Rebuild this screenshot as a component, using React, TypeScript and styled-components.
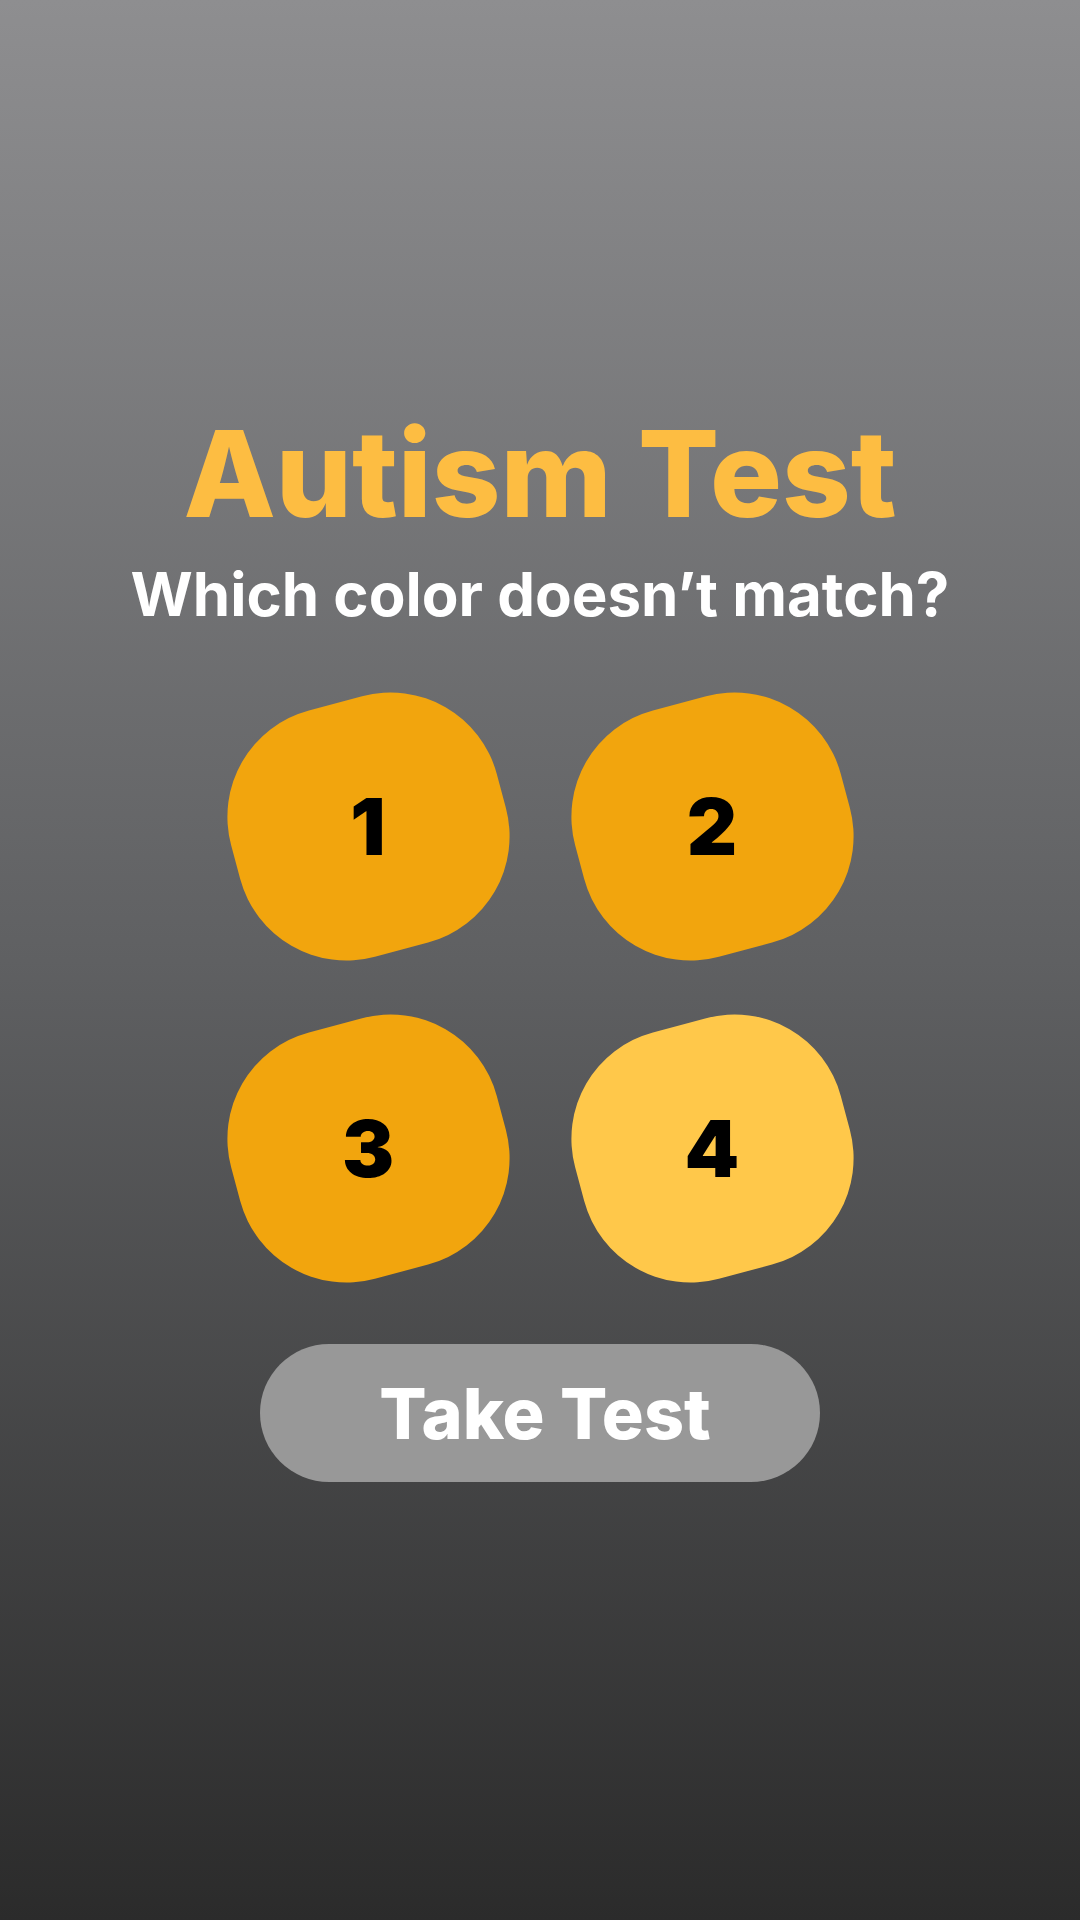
import React from 'react'
import styled, { createGlobalStyle } from 'styled-components'

const GlobalStyle = createGlobalStyle`
  html, body {
    margin: 0;
    padding: 0;
  }
  body {
    font-family: Inter, "Noto Sans", sans-serif;
  }
`

const choices = [
  { label: '1', odd: false },
  { label: '2', odd: false },
  { label: '3', odd: false },
  { label: '4', odd: true },
]

const App: React.FC = () => {
  return (
    <>
      <GlobalStyle />
      <StyledPage>
        <StyledTitle>Autism Test</StyledTitle>
        <StyledQuestion>Which color doesn’t match?</StyledQuestion>
        <StyledGrid>
          {choices.map(c => (
            <StyledChoice key={c.label}>
              <StyledBlob odd={c.odd} />
              <StyledNumber>{c.label}</StyledNumber>
            </StyledChoice>
          ))}
        </StyledGrid>
        <StyledButton>Take Test</StyledButton>
      </StyledPage>
    </>
  )
}

const StyledPage = styled.div`
  min-height: 1920px;
  box-sizing: border-box;
  display: flex;
  flex-direction: column;
  align-items: center;
  padding-top: 414px;
  background: linear-gradient(180deg, #8e8e90 0%, #5f6062 50%, #2b2b2b 100%);
`

const StyledTitle = styled.h1`
  margin: 0;
  font-size: 120px;
  line-height: 1;
  font-weight: 800;
  color: #fdbd42;
`

const StyledQuestion = styled.h2`
  margin: 30px 0 0;
  font-size: 60px;
  line-height: 1;
  font-weight: 700;
  color: #ffffff;
`

const StyledGrid = styled.div`
  display: grid;
  grid-template-columns: repeat(2, 265px);
  column-gap: 79px;
  row-gap: 57px;
  margin-top: 70px;
`

const StyledChoice = styled.div`
  position: relative;
  width: 265px;
  height: 265px;
  display: flex;
  align-items: center;
  justify-content: center;
`

const StyledBlob = styled.div.withConfig({ shouldForwardProp: p => p !== 'odd' })<{ odd: boolean }>`
  position: absolute;
  inset: 5px -5px;
  border-radius: 110px;
  transform: rotate(-15deg);
  background: ${props => (props.odd ? '#ffc84a' : '#f2a50d')};
`

const StyledNumber = styled.span`
  position: relative;
  font-size: 78px;
  line-height: 1;
  font-weight: 900;
  color: #000000;
`

const StyledButton = styled.button`
  margin-top: 63px;
  width: 560px;
  height: 138px;
  border: none;
  border-radius: 69px;
  background: #989898;
  color: #ffffff;
  font-family: Inter, "Noto Sans", sans-serif;
  font-size: 70px;
  font-weight: 800;
  padding: 0 0 0 10px;
  cursor: pointer;
`

export default App
